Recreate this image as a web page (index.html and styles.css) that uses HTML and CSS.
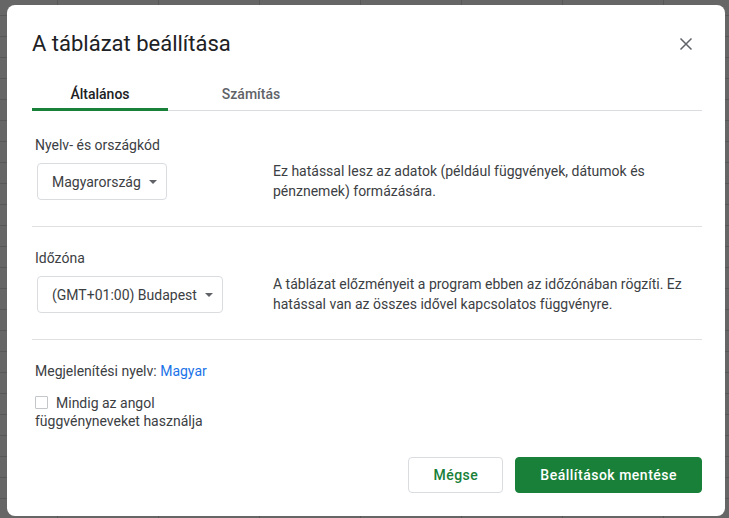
FILE: index.html
```html
<!DOCTYPE html>
<html lang="hu">
<head>
<meta charset="utf-8">
<title>A táblázat beállítása</title>
<link rel="stylesheet" href="styles.css">
</head>
<body>
<div class="dialog">
  <div class="header">
    <h1 class="title">A táblázat beállítása</h1>
    <button class="close" aria-label="Bezárás">
      <svg width="24" height="24" viewBox="0 0 24 24"><path d="M6.5 6.5 L17.5 17.5 M17.5 6.5 L6.5 17.5" stroke="#5f6368" stroke-width="1.5" fill="none"/></svg>
    </button>
  </div>
  <div class="tabs">
    <div class="tab active">Általános</div>
    <div class="tab">Számítás</div>
  </div>
  <div class="panel">
    <div class="section first">
      <div class="label">Nyelv- és országkód</div>
      <div class="row">
        <div class="col">
          <div class="select">Magyarország<span class="arrow"></span></div>
        </div>
        <div class="desc">Ez hatással lesz az adatok (például függvények, dátumok és pénznemek) formázására.</div>
      </div>
    </div>
    <div class="section">
      <div class="label">Időzóna</div>
      <div class="row">
        <div class="col">
          <div class="select">(GMT+01:00) Budapest<span class="arrow"></span></div>
        </div>
        <div class="desc">A táblázat előzményeit a program ebben az időzónában rögzíti. Ez hatással van az összes idővel kapcsolatos függvényre.</div>
      </div>
    </div>
    <div class="section last">
      <div class="label">Megjelenítési nyelv: <span class="link">Magyar</span></div>
      <label class="check"><span class="box"></span>Mindig az angol függvényneveket használja</label>
    </div>
  </div>
  <div class="actions">
    <button class="btn cancel">Mégse</button>
    <button class="btn save">Beállítások mentése</button>
  </div>
</div>
</body>
</html>
```

FILE: styles.css
```css
html, body {
  margin: 0;
  padding: 0;
  height: 518px;
  overflow: hidden;
}
body {
  background-color: #666666;
  background-image:
    repeating-linear-gradient(to right, transparent 0 57px, #585858 57px 58px, transparent 58px 101px),
    repeating-linear-gradient(to bottom, transparent 0 15px, #585858 15px 16px, transparent 16px 21px);
  background-position: 0 0, 0 0;
  font-family: Roboto, "Liberation Sans", Arial, sans-serif;
  color: #3c4043;
  font-size: 14px;
  line-height: 20px;
}
.dialog {
  box-sizing: border-box;
  margin: 5px 0 0 7px;
  width: 718px;
  height: 511px;
  background: #ffffff;
  border-radius: 8px;
  padding: 25px 23px 23px 25px;
  display: flex;
  flex-direction: column;
}
.header {
  display: flex;
  align-items: center;
  justify-content: space-between;
  height: 28px;
}
.title {
  margin: 0;
  font-size: 22px;
  line-height: 28px;
  font-weight: 400;
  color: #202124;
}
.close {
  border: 0;
  background: none;
  padding: 0;
  margin-right: 4px;
  width: 24px;
  height: 24px;
  display: flex;
}
.tabs {
  display: flex;
  margin-top: 20px;
  height: 32px;
  border-bottom: 1px solid #dadce0;
}
.tab {
  box-sizing: border-box;
  height: 33px;
  padding-top: 6px;
  text-align: center;
  font-weight: 500;
  color: #5f6368;
  border-bottom: 3px solid transparent;
}
.tab.active {
  width: 136px;
  color: #202124;
  border-bottom-color: #188038;
}
.tab:nth-child(2) {
  width: 166px;
}
.section {
  padding: 21px 0 25px 3px;
  border-bottom: 1px solid #e0e0e0;
}
.section.first {
  padding-top: 24px;
}
.section.last {
  border-bottom: 0;
  padding-top: 21px;
  padding-bottom: 0;
}
.label {
  color: #3c4043;
}
.link {
  color: #1a73e8;
}
.row {
  display: flex;
  margin-top: 8px;
}
.col {
  width: 238px;
  flex: none;
}
.select {
  box-sizing: border-box;
  display: inline-flex;
  align-items: center;
  height: 37px;
  margin-left: 2px;
  padding: 0 9px 0 14px;
  border: 1px solid #dadce0;
  border-radius: 4px;
  color: #3c4043;
}
.arrow {
  margin-left: 8px;
  width: 0;
  height: 0;
  border-left: 4px solid transparent;
  border-right: 4px solid transparent;
  border-top: 4px solid #5f6368;
}
.desc {
  margin-top: -2px;
  flex: 1;
}
.check {
  display: block;
  margin-top: 13px;
  width: 200px;
  line-height: 18px;
  color: #3c4043;
}
.box {
  display: inline-block;
  box-sizing: border-box;
  width: 13px;
  height: 13px;
  border: 1px solid #c4c7ca;
  border-radius: 1px;
  margin-right: 8px;
  vertical-align: -1px;
}
.actions {
  margin-top: auto;
  display: flex;
  justify-content: flex-end;
  gap: 12px;
}
.btn {
  box-sizing: border-box;
  height: 36px;
  padding: 0 24px;
  border-radius: 4px;
  border: 1px solid #dadce0;
  font-family: Roboto, "Liberation Sans", Arial, sans-serif;
  font-size: 14px;
  font-weight: 500;
  letter-spacing: 0.5px;
  background: #ffffff;
  color: #188038;
}
.btn.save {
  background: #188038;
  border-color: #188038;
  color: #ffffff;
}
```
